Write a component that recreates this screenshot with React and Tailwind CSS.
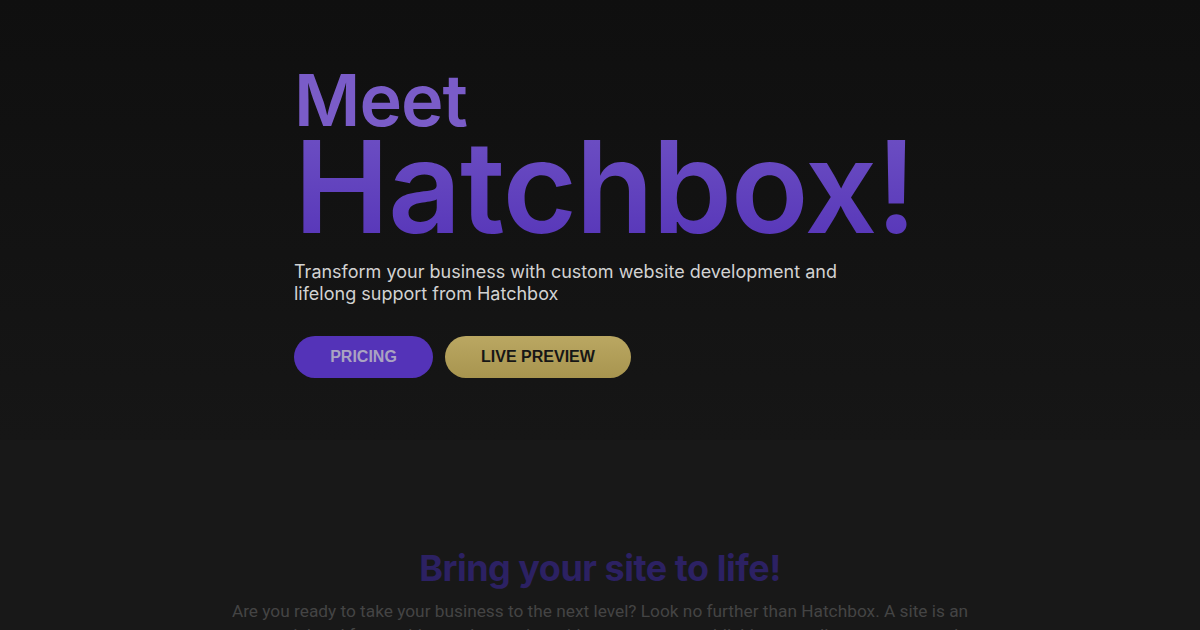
export default function App() {
  return (
    <div className="w-[1200px] h-[630px] overflow-hidden bg-[#181818]" style={{ fontFamily: "Inter, 'Noto Sans', sans-serif" }}>
      <section className="h-[440px] bg-gradient-to-b from-[#0f0f0f] to-[#161616] pl-[294px] pt-[62px]">
        <h1 className="flex flex-col font-semibold">
          <span className="text-[72px] leading-[76px] text-[#7a5cc8] tracking-[-1px]">Meet</span>
          <span className="text-[128px] leading-[96px] tracking-[-1.5px] bg-gradient-to-b from-[#6b4dc2] to-[#5634b8] bg-clip-text text-transparent pt-[1px] pb-[18px]">Hatchbox!</span>
        </h1>
        <p className="mt-[8px] w-[560px] text-[18px] leading-[22px] text-[#d2d2d2]">
          Transform your business with custom website development and lifelong support from Hatchbox
        </p>
        <div className="mt-[31px] flex gap-[12px]" style={{ fontFamily: "'Liberation Sans', Arial, sans-serif" }}>
          <button className="h-[42px] w-[139px] rounded-full bg-[#5433b8] text-[16px] font-bold text-[#aaa3c2]">PRICING</button>
          <button className="h-[42px] w-[186px] rounded-full bg-gradient-to-b from-[#baa762] to-[#a8954f] text-[16px] font-bold text-[#161616]">LIVE PREVIEW</button>
        </div>
      </section>
      <section className="flex flex-col items-center pt-[106px]">
        <h2 className="text-[36px] leading-[44px] font-bold tracking-[-0.5px] text-[#2c2163]">Bring your site to life!</h2>
        <p className="mt-[9px] w-[770px] text-center text-[17.3px] leading-[24px] text-[#444444]" style={{ fontFamily: "Roboto, 'Noto Sans', sans-serif" }}>
          Are you ready to take your business to the next level? Look no further than Hatchbox. A site is an essential tool for reaching and engaging with customers, establishing an online presence, and standing out from the competition.
        </p>
      </section>
    </div>
  );
}
